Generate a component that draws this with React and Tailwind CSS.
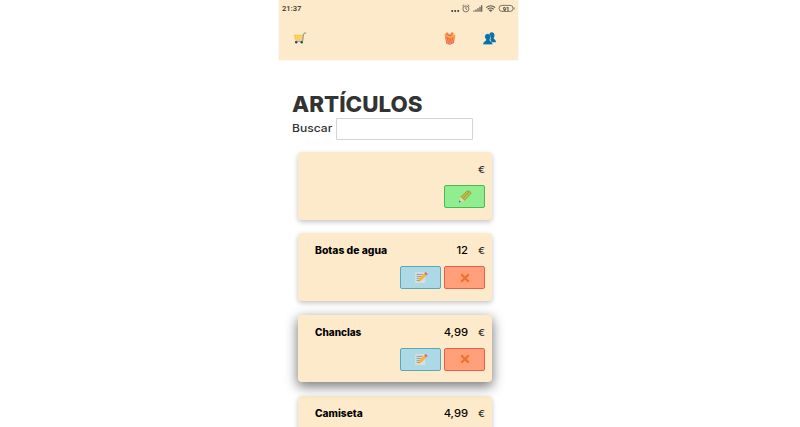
import React from 'react';

function Cart() {
  return (
    <svg viewBox="0 0 14 12" className="h-3 w-3.5">
      <path d="M1 2.8h9.4L9.8 7.8H1.8z" fill="#fbc338" />
      <path d="M3.3 3v4.8M5.3 3v4.8M7.3 3v4.8M9 3v4.8M1.5 4.5h9M1.8 6.2h8.4" stroke="#ffe39b" strokeWidth=".4" />
      <path d="M13.2 1h-1.9l-.9 2-.7 6.2H2.4" fill="none" stroke="#5f7f8c" strokeWidth=".8" />
      <circle cx="3.2" cy="10.3" r="1.2" fill="#31454f" />
      <circle cx="8.7" cy="10.3" r="1.2" fill="#31454f" />
    </svg>
  );
}

function Gift() {
  return (
    <svg viewBox="0 0 12 13" className="h-[13px] w-3">
      <path d="M1 4l10-.4-1 7.4-4.2 1.8-3.6-1.4z" fill="#e8586b" />
      <path d="M.3 1.8l4.9 2 5.9-1.5.4 2.3L6 6.4.8 4.4z" fill="#f7ad38" />
      <path d="M2.3 5.6l1.3 5.9M4.8 6.6l.4 5.8M7.4 6.2l-.6 5.6M9.6 5.4l-1 5.6" stroke="#f6ac3f" strokeWidth="1" />
      <path d="M5.4 3.8C3 3.6 1.4 2.2 2.2 1.2s2.6.4 3.4 2.6C6.2 1.8 7.8.2 8.8.9s-.4 2.6-3.4 2.9z" fill="#f3a133" stroke="#e0576a" strokeWidth=".7" />
    </svg>
  );
}

function People() {
  return (
    <svg viewBox="0 0 13 13" className="h-[13px] w-[13px]" fill="#0871ac">
      <path d="M6.1 3.2c0-4 5.4-4 5.4.1 0 1.6-.7 2.2-.9 3 .2 1 2.2 1.2 2.4 4H8.5L7.3 7.2 8 6z" />
      <path d="M1.8 4.6c0-3.8 5.8-3.8 5.8.1 0 1.8-.9 2.5-1 3.3.1 1.2 2.9 1.3 3.1 4.6H0c.1-3.3 3-3.5 3.2-4.6-.2-.8-1.4-1.6-1.4-3.4z" stroke="#fdeaca" strokeWidth=".3" />
    </svg>
  );
}

function Status() {
  return (
    <svg viewBox="0 0 65 10" className="h-2.5 w-[65px]" fill="none" stroke="#5d564e">
      <g fill="#38342f" stroke="none">
        <circle cx="2.2" cy="6.9" r="1" />
        <circle cx="5.2" cy="6.9" r="1" />
        <circle cx="8.2" cy="6.9" r="1" />
      </g>
      <circle cx="15.9" cy="4.9" r="3" strokeWidth=".8" />
      <path d="M12.3 2.2l1.9-1.5M19.5 2.2l-1.9-1.5M15.9 3v2l1 .7" strokeWidth=".8" />
      <path d="M24 7.8V6.4M26 7.8V5.4M28 7.8V4.2M30 7.8V2.8M31.7 7.8V1.3" strokeWidth="1.2" />
      <path d="M36.2 3.6q4.5-3.6 9 0M37.7 5.2q3-2.3 6 0M39.2 6.7q1.5-1.2 3 0" strokeWidth="1.1" />
      <path d="M39.9 7.2h1.6l-.8 1.1z" fill="#5d564e" stroke="none" />
      <rect x="49.1" y="1.4" width="13.9" height="6" rx="2.8" strokeWidth=".8" />
      <path d="M64.1 3.4v2" strokeWidth=".8" />
      <text x="56.1" y="6.6" textAnchor="middle" fontFamily="Roboto" fontSize="6" fontWeight="700" fill="#45403a" stroke="none">91</text>
    </svg>
  );
}

function Pencil() {
  return (
    <svg viewBox="0 0 14 13" className="h-[13px] w-3.5">
      <path d="M2.6 7.1L9.3.9q2.4-.4 3.9 2.3L6.4 10.4z" fill="#bcbb45" stroke="#858a30" strokeWidth=".6" />
      <path d="M4.4 8.7l7-6.8" stroke="#8d9236" strokeWidth=".6" />
      <path d="M2.6 7.1l3.8 3.3-5 1.9z" fill="#f6cfab" />
      <path d="M1.8 10.2L.6 12.5l2.2-.6z" fill="#246eaa" />
    </svg>
  );
}

function Memo() {
  return (
    <svg viewBox="0 0 14 13" className="h-[13px] w-3.5">
      <path d="M1.2 1.3h9.6l.6 10.8H1.2z" fill="#dcdedc" />
      <path d="M2.5 3.4h6.3M2.5 5.4h5M2.5 7.4h4M2.5 9.4h3.2" stroke="#8c9599" strokeWidth=".9" />
      <path d="M4.6 10.2l.9-3 5-4.9 2.1 2-5 5z" fill="#f8b62f" />
      <path d="M10.3 2.3l1.2-1.2 2.1 2-1.2 1.2z" fill="#e3596b" />
      <path d="M4.6 10.2l.3-1 .8.7z" fill="#5d5148" />
    </svg>
  );
}

function Cross() {
  return (
    <svg viewBox="0 0 10 10" className="h-2.5 w-2.5">
      <path d="M1.2 1.2l7.6 7.6M8.8 1.2L1.2 8.8" stroke="#f0702c" strokeWidth="2.3" />
    </svg>
  );
}

function Action({ tone, label, children }) {
  return (
    <button aria-label={label} className={`flex h-[23px] w-[41px] items-center justify-center rounded-[2px] border ${tone}`}>
      {children}
    </button>
  );
}

function Card({ name, price, nameStyle = '', priceStyle = '', raised = false, draft = false }) {
  return (
    <article className={`relative flex h-[67.8px] w-[194px] shrink-0 flex-col rounded-[4px] bg-[#fdeaca] pr-[6.6px] pl-[17px] ${raised ? 'z-10 shadow-[0_4px_12px_1px_rgba(0,0,0,0.5)]' : 'shadow-[0_2px_5px_rgba(0,0,0,0.24)]'}`}>
      <div className="mt-[9px] flex h-[17px] items-center text-[9.7px] leading-[17px] text-black">
        <span className={`origin-left whitespace-nowrap font-extrabold ${nameStyle}`}>{name}</span>
        <span className={`ml-auto origin-right whitespace-nowrap font-medium ${priceStyle}`}>{price}</span>
        <span className="ml-[10px] w-[7px] origin-right scale-x-110 text-right text-[9.5px] font-medium text-[#333]">€</span>
      </div>
      <div className="mt-[7px] flex justify-end gap-[3.4px]">
        {draft ? (
          <Action label="Crear" tone="border-[#4eb74e] bg-[#90ee90]"><Pencil /></Action>
        ) : (
          <>
            <Action label="Editar" tone="border-[#55a9bd] bg-[#add8e6]"><Memo /></Action>
            <Action label="Borrar" tone="border-[#e85d52] bg-[#ffa07a]"><Cross /></Action>
          </>
        )}
      </div>
    </article>
  );
}

export default function App() {
  return (
    <div className="flex h-[427px] justify-center overflow-hidden bg-white pr-[3px] font-['Inter',sans-serif]">
      <main className="flex w-[239px] flex-col">
        <header className="h-[60px] shrink-0 bg-[#fdeaca] shadow-[0_0_1px_#ead9bd]">
          <div className="flex h-[17px] items-center justify-between pr-[3px] pl-[3px]">
            <span className="font-['Roboto'] text-[7.6px] font-medium text-[#34312d]">21:37</span>
            <Status />
          </div>
          <nav className="flex h-[43px] items-center pr-[22px] pb-px pl-[14px]">
            <Cart />
            <span className="mr-[27px] ml-auto"><Gift /></span>
            <People />
          </nav>
        </header>
        <section className="flex flex-col pt-[31px] pl-[12.5px]">
          <h1 className="h-[27px] w-[130px] origin-left scale-x-[1.017] text-[22px] leading-[26px] font-extrabold whitespace-nowrap text-[#333]">ARTÍCULOS</h1>
          <label className="flex h-[22px] items-center">
            <span className="w-[44.5px] shrink-0 pb-px text-[11px] font-medium text-[#333]">
              <span className="inline-block origin-left scale-x-[1.1]">Buscar</span>
            </span>
            <input className="h-[22px] w-[137px] rounded-[1px] border border-[#d4d4d4] bg-white outline-none" />
          </label>
        </section>
        <div className="mt-[12px] ml-[19px] flex flex-col gap-[13.5px]">
          <Card draft />
          <Card name="Botas de agua" price="12" nameStyle="scale-x-[1.07]" priceStyle="scale-x-[1.16]" />
          <Card name="Chanclas" price="4,99" nameStyle="scale-x-[1.03]" priceStyle="scale-x-[1.16]" raised />
          <Card name="Camiseta" price="4,99" nameStyle="scale-x-[1.05]" priceStyle="scale-x-[1.16]" />
        </div>
      </main>
    </div>
  );
}
